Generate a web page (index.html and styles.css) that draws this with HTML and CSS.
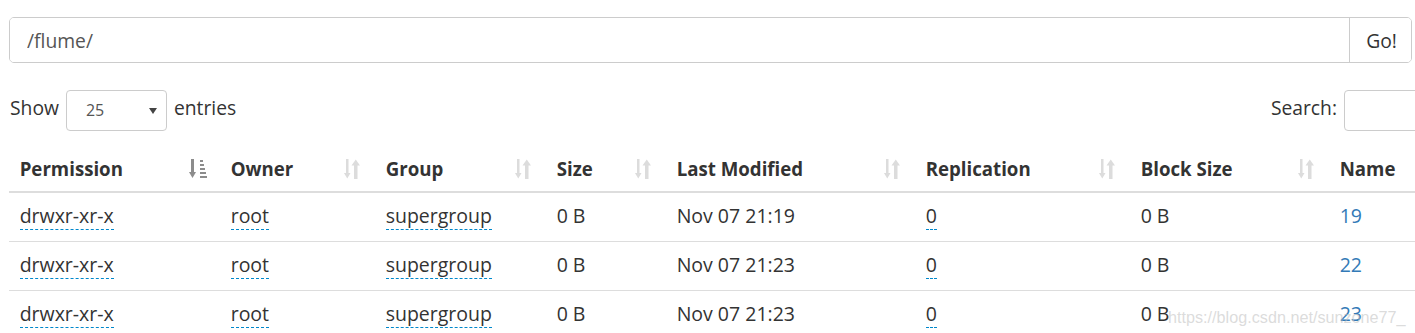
FILE: index.html
```html
<!DOCTYPE html>
<html>
<head>
<meta charset="utf-8">
<link rel="stylesheet" href="styles.css">
</head>
<body>
<div class="page">
  <div class="input-group">
    <input class="path-input" type="text" value="/flume/">
    <button class="go-btn">Go!</button>
  </div>

  <div class="controls">
    <div class="length">
      <span>Show</span>
      <div class="select"><span>25</span><span class="caret"></span></div>
      <span>entries</span>
    </div>
    <div class="filter">
      <span>Search:</span>
      <div class="search-box"></div>
    </div>
  </div>

  <table class="files">
    <colgroup>
      <col style="width:211px"><col style="width:155px"><col style="width:171px"><col style="width:120px">
      <col style="width:249px"><col style="width:215px"><col style="width:199px"><col style="width:200px">
    </colgroup>
    <thead>
      <tr>
        <th><div class="th"><span>Permission</span>
          <svg class="sort asc" width="20" height="20" viewBox="0 0 20 20"><rect x="2" y="0" width="3" height="14"/><polygon points="0,13 7,13 3.5,19"/><rect x="11" y="1" width="3" height="2"/><rect x="11" y="5" width="4" height="2"/><rect x="11" y="9" width="5" height="2"/><rect x="11" y="13" width="6" height="2"/><rect x="11" y="17" width="7" height="2"/></svg></div></th>
        <th><div class="th"><span>Owner</span><svg class="sort both" width="18" height="20" viewBox="0 0 18 20"><rect x="2" y="0" width="2.5" height="15"/><polygon points="0,14 6.5,14 3.25,19.5"/><rect x="10" y="5" width="3.5" height="15"/><polygon points="7.5,6.5 16,6.5 11.75,0.5"/></svg></div></th>
        <th><div class="th"><span>Group</span><svg class="sort both" width="18" height="20" viewBox="0 0 18 20"><rect x="2" y="0" width="2.5" height="15"/><polygon points="0,14 6.5,14 3.25,19.5"/><rect x="10" y="5" width="3.5" height="15"/><polygon points="7.5,6.5 16,6.5 11.75,0.5"/></svg></div></th>
        <th><div class="th"><span>Size</span><svg class="sort both" width="18" height="20" viewBox="0 0 18 20"><rect x="2" y="0" width="2.5" height="15"/><polygon points="0,14 6.5,14 3.25,19.5"/><rect x="10" y="5" width="3.5" height="15"/><polygon points="7.5,6.5 16,6.5 11.75,0.5"/></svg></div></th>
        <th><div class="th"><span>Last Modified</span><svg class="sort both" width="18" height="20" viewBox="0 0 18 20"><rect x="2" y="0" width="2.5" height="15"/><polygon points="0,14 6.5,14 3.25,19.5"/><rect x="10" y="5" width="3.5" height="15"/><polygon points="7.5,6.5 16,6.5 11.75,0.5"/></svg></div></th>
        <th><div class="th"><span>Replication</span><svg class="sort both" width="18" height="20" viewBox="0 0 18 20"><rect x="2" y="0" width="2.5" height="15"/><polygon points="0,14 6.5,14 3.25,19.5"/><rect x="10" y="5" width="3.5" height="15"/><polygon points="7.5,6.5 16,6.5 11.75,0.5"/></svg></div></th>
        <th><div class="th"><span>Block Size</span><svg class="sort both" width="18" height="20" viewBox="0 0 18 20"><rect x="2" y="0" width="2.5" height="15"/><polygon points="0,14 6.5,14 3.25,19.5"/><rect x="10" y="5" width="3.5" height="15"/><polygon points="7.5,6.5 16,6.5 11.75,0.5"/></svg></div></th>
        <th><div class="th"><span>Name</span></div></th>
      </tr>
    </thead>
    <tbody>
      <tr>
        <td><span class="editable">drwxr-xr-x</span></td>
        <td><span class="editable">root</span></td>
        <td><span class="editable">supergroup</span></td>
        <td>0 B</td>
        <td>Nov 07 21:19</td>
        <td><span class="editable">0</span></td>
        <td>0 B</td>
        <td><a class="link">19</a></td>
      </tr>
      <tr>
        <td><span class="editable">drwxr-xr-x</span></td>
        <td><span class="editable">root</span></td>
        <td><span class="editable">supergroup</span></td>
        <td>0 B</td>
        <td>Nov 07 21:23</td>
        <td><span class="editable">0</span></td>
        <td>0 B</td>
        <td><a class="link">22</a></td>
      </tr>
      <tr>
        <td><span class="editable">drwxr-xr-x</span></td>
        <td><span class="editable">root</span></td>
        <td><span class="editable">supergroup</span></td>
        <td>0 B</td>
        <td>Nov 07 21:23</td>
        <td><span class="editable">0</span></td>
        <td>0 B</td>
        <td><a class="link">23</a></td>
      </tr>
    </tbody>
  </table>
</div>
<div class="watermark">https://blog.csdn.net/sunzone77_</div>
</body>
</html>
```

FILE: styles.css
```css
html, body {
  margin: 0;
  padding: 0;
  overflow: hidden;
  background: #fff;
}
body {
  font-family: "Open Sans", "Noto Sans", sans-serif;
  font-size: 18.67px;
  line-height: 26.67px;
  color: #333;
  position: relative;
  width: 1415px;
  height: 333px;
}
.page {
  padding: 17px 0 0 9px;
  width: 1560px;
}
.input-group {
  display: flex;
  width: 1403px;
  height: 46px;
  box-sizing: border-box;
  border: 1px solid #ccc;
  border-radius: 5px;
  overflow: hidden;
}
.path-input {
  flex: 1;
  border: 0;
  outline: 0;
  padding: 0 17px;
  font-family: inherit;
  font-size: 19.3px;
  color: #555;
  background: #fff;
}
.go-btn {
  width: 62px;
  border: 0;
  border-left: 1px solid #ccc;
  background: #fff;
  font-family: inherit;
  font-size: 19.3px;
  color: #333;
  padding: 0 0 0 2px;
}
.controls {
  display: flex;
  justify-content: space-between;
  align-items: center;
  margin-top: 27px;
  width: 1535px;
  height: 41px;
  font-size: 19.3px;
}
.length, .filter {
  display: flex;
  align-items: center;
  gap: 7px;
}
.length { padding-left: 1px; }
.length > span, .filter > span { position: relative; top: -2px; }
.select {
  display: flex;
  align-items: center;
  box-sizing: border-box;
  width: 101px;
  height: 41px;
  border: 1px solid #ccc;
  border-radius: 4px;
  padding: 0 7px 0 19px;
  font-size: 16px;
  color: #555;
}
.caret {
  margin-left: auto;
  width: 0;
  height: 0;
  border-left: 4px solid transparent;
  border-right: 4px solid transparent;
  border-top: 6px solid #444;
  margin-right: 2px;
}
.search-box {
  width: 200px;
  height: 41px;
  box-sizing: border-box;
  border: 1px solid #ccc;
  border-radius: 4px;
}
.files {
  margin-top: 12px;
  border-collapse: collapse;
  table-layout: fixed;
  width: 1520px;
}
.files th, .files td {
  padding: 10.67px 10.67px;
  text-align: left;
  vertical-align: middle;
  white-space: nowrap;
}
.files th {
  font-weight: 700;
  border-bottom: 2px solid #ddd;
  padding-top: 12.67px;
  padding-bottom: 8.67px;
}
.files td {
  border-top: 1px solid #ddd;
  font-size: 19.5px;
  padding-top: 10.17px;
  padding-bottom: 11.17px;
}
.files tbody tr:first-child td { border-top: 0; }
.th {
  display: flex;
  justify-content: space-between;
  align-items: center;
}
.sort { flex: none; }
.sort.asc { fill: #8c8c8c; }
.sort.both { fill: #dcdcdc; margin-right: 2px; }
.editable {
  border-bottom: 1px dashed #0088cc;
}
.link {
  color: #337ab7;
  text-decoration: none;
}
.watermark {
  position: absolute;
  left: 1168px;
  top: 304px;
  font-family: "Liberation Sans", Arial, sans-serif;
  font-size: 16.2px;
  color: rgba(190, 190, 190, 0.55);
  white-space: nowrap;
}
```
